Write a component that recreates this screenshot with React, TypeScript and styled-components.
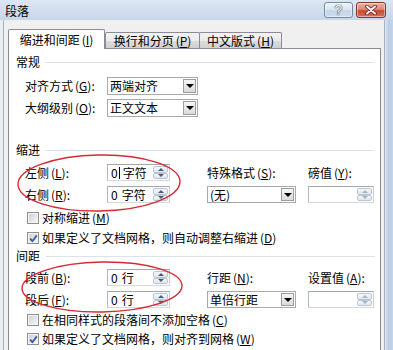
import React from "react";
import styled, { createGlobalStyle } from "styled-components";

const FONT = `"Noto Sans CJK SC", "Noto Sans", "DejaVu Sans", sans-serif`;

const GlobalStyle = createGlobalStyle`
  html, body { margin: 0; padding: 0; background: #ffffff; }
  body { font-family: ${FONT}; font-size: 12px; color: #000; }
  * { box-sizing: border-box; }
`;

const Window = styled.div`
  position: relative;
  width: 393px;
  height: 350px;
  overflow: hidden;
  display: flex;
  flex-direction: column;
  font-family: ${FONT};
  font-size: 12px;
  color: #000;
  background: #cbd9ea;
`;

const TitleBar = styled.div`
  flex: none;
  height: 20px;
  display: flex;
  align-items: flex-start;
  padding: 0 7px 0 5px;
  background: linear-gradient(180deg, #dce6f3 0%, #d0ddee 60%, #c7d6ea 100%);
`;

const Title = styled.div`
  flex: 1;
  line-height: 22px;
  color: #000;
`;

const CaptionButtons = styled.div`
  display: flex;
  gap: 3px;
  margin-top: 2px;
`;

const CaptionButton = styled.div<{ $variant: "help" | "close" }>`
  width: ${(p) => (p.$variant === "close" ? 30 : 29)}px;
  height: 16px;
  border-radius: 3px;
  display: flex;
  align-items: center;
  justify-content: center;
  border: 1px solid ${(p) => (p.$variant === "close" ? "#7d3b30" : "#7288a5")};
  background: ${(p) =>
    p.$variant === "close"
      ? "linear-gradient(180deg, #eab2a3 0%, #dc8a75 45%, #c6492f 55%, #d4705a 100%)"
      : "linear-gradient(180deg, #eef3f9 0%, #dbe5f1 45%, #c4d4e8 55%, #cfdcec 100%)"};
  box-shadow: inset 0 0 0 1px rgba(255, 255, 255, 0.45);
`;

const HelpGlyph = styled.span`
  font-family: "Liberation Sans", sans-serif;
  font-size: 14px;
  line-height: 1;
  color: #f7f9fc;
  text-shadow: 0 0 1px #3b4a62, 0 0 1px #3b4a62, 0 0 1px #3b4a62;
`;

const FrameRow = styled.div`
  flex: 1;
  min-height: 0;
  display: flex;
`;

const LeftEdge = styled.div`
  flex: none;
  width: 4px;
  background: #e9eef5;
  border-right: 1px solid #a7b3c2;
`;

const RightEdge = styled.div`
  flex: none;
  width: 9px;
  border-left: 1px solid #a7b3c2;
  background: linear-gradient(90deg, #dce6f2 0%, #b9cce4 50%, #c6d6ea 100%);
`;

const Body = styled.div`
  flex: 1;
  min-width: 0;
  background: #f0f0f0;
  padding: 9px 3px 0 4px;
  display: flex;
  flex-direction: column;
`;

const TabStrip = styled.div`
  position: relative;
  z-index: 1;
  flex: none;
  height: 20px;
  display: flex;
  align-items: flex-end;
`;

const Tab = styled.div<{ $active?: boolean; $w: number; $overlap?: boolean }>`
  width: ${(p) => p.$w}px;
  height: ${(p) => (p.$active ? 20 : 16)}px;
  margin-bottom: ${(p) => (p.$active ? 0 : 1)}px;
  margin-left: ${(p) => (p.$overlap ? -1 : 0)}px;
  border: 1px solid #898c95;
  border-bottom: none;
  border-radius: 2px 2px 0 0;
  background: ${(p) =>
    p.$active
      ? "#ffffff"
      : "linear-gradient(180deg, #f3f3f3 0%, #ebebeb 50%, #dddddd 51%, #d0d0d0 100%)"};
  display: flex;
  align-items: center;
  justify-content: center;
  white-space: nowrap;
  line-height: 14px;
`;

const Panel = styled.div`
  flex: 1;
  margin-top: -1px;
  background: #ffffff;
  border: 1px solid #898c95;
  border-bottom: none;
  display: flex;
  flex-direction: column;
  padding: 6px 5px 0 0;
`;

const SectionHeader = styled.div<{ $mt: number }>`
  margin-top: ${(p) => p.$mt}px;
  height: 14px;
  display: flex;
  align-items: center;
  padding-left: 7px;
  line-height: 14px;
  white-space: nowrap;
  &::after {
    content: "";
    flex: 1;
    height: 1px;
    background: #dde2e8;
    margin-left: 6px;
  }
`;

const FieldGrid = styled.div<{ $mt: number; $rowH: number; $gap: number; $cols: string }>`
  margin-top: ${(p) => p.$mt}px;
  padding-left: 16px;
  display: grid;
  grid-template-columns: ${(p) => p.$cols};
  grid-auto-rows: ${(p) => p.$rowH}px;
  row-gap: ${(p) => p.$gap}px;
  align-items: stretch;
  justify-items: start;
`;

const FieldLabel = styled.div`
  display: flex;
  align-items: center;
  white-space: nowrap;
  line-height: 14px;
`;

const Key = styled.span`
  margin-left: 2px;
`;

const U = styled.span`
  text-decoration: underline;
  text-underline-offset: 1px;
`;

const Select = styled.div<{ $w: number }>`
  width: ${(p) => p.$w}px;
  height: 100%;
  display: flex;
  align-items: stretch;
  background: #ffffff;
  border: 1px solid #a9a9a9;
  padding: 1px 1px 1px 2px;
`;

const SelectText = styled.span`
  flex: 1;
  display: flex;
  align-items: center;
  white-space: nowrap;
  line-height: 14px;
`;

const DropButton = styled.span`
  width: 13px;
  border: 1px solid #9c9c9c;
  background: linear-gradient(180deg, #f6f6f6, #dadada);
  display: flex;
  align-items: center;
  justify-content: center;
  &::after {
    content: "";
    border-left: 4px solid transparent;
    border-right: 4px solid transparent;
    border-top: 4px solid #000;
  }
`;

const Spin = styled.div<{ $w: number }>`
  width: ${(p) => p.$w}px;
  height: 100%;
  display: flex;
  background: #ffffff;
  border: 1px solid;
  border-color: #a2a8b1 #cdd1d7 #d5d9de #b3b8bf;
  padding: 1px;
`;

const SpinValue = styled.span`
  flex: 1;
  padding-left: 2px;
  display: flex;
  align-items: center;
  white-space: nowrap;
  line-height: 13px;
`;

const SpinText = styled.span`
  display: inline-flex;
  align-items: center;
`;

const Unit = styled.span`
  margin-left: 4px;
`;

const Caret = styled.span`
  display: inline-block;
  width: 1px;
  height: 12px;
  background: #000;
  margin: 0 -1px 0 1px;
`;

const SpinButtons = styled.div`
  width: 15px;
  display: flex;
  flex-direction: column;
`;

const SpinButton = styled.div<{ $dir: "up" | "down"; $dim?: boolean }>`
  flex: 1;
  border: 1px solid #bcc6d2;
  border-radius: 2px;
  background: linear-gradient(180deg, #f6f8fb, #dfe6ee);
  display: flex;
  align-items: center;
  justify-content: center;
  &::after {
    content: "";
    border-left: 3px solid transparent;
    border-right: 3px solid transparent;
    ${(p) => (p.$dir === "up" ? "border-bottom" : "border-top")}: 3px solid
      ${(p) => (p.$dim ? "#a9b4c3" : "#4c5d78")};
  }
`;

const CheckRow = styled.div<{ $mt: number }>`
  margin-top: ${(p) => p.$mt}px;
  height: 14px;
  display: flex;
  align-items: center;
  gap: 3px;
  padding-left: 18px;
  white-space: nowrap;
  line-height: 14px;
`;

const CheckBox = styled.span`
  flex: none;
  width: 12px;
  height: 12px;
  border: 1px solid #8e8f8f;
  background: linear-gradient(135deg, #c9cdd3 0%, #e6e8eb 60%, #f7f7f7 100%);
  box-shadow: inset 0 0 0 1px #f4f4f4;
  display: flex;
  align-items: center;
  justify-content: center;
`;

const Annotation = styled.svg`
  position: absolute;
  left: 0;
  top: 0;
  width: 393px;
  height: 350px;
  pointer-events: none;
  z-index: 5;
`;

const Label: React.FC<{ text: string; k: string; colon?: boolean }> = ({ text, k, colon = true }) => (
  <>
    {text}
    <Key>
      (<U>{k}</U>){colon ? ":" : ""}
    </Key>
  </>
);

const SpinBox: React.FC<{ w: number; value?: string; unit?: string; caret?: boolean; dim?: boolean }> = ({
  w,
  value,
  unit,
  caret,
  dim,
}) => (
  <Spin $w={w}>
    <SpinValue>
      {value !== undefined && (
        <SpinText>
          <span>{value}</span>
          {caret && <Caret />}
          <Unit>{unit}</Unit>
        </SpinText>
      )}
    </SpinValue>
    <SpinButtons>
      <SpinButton $dir="up" $dim={dim} />
      <SpinButton $dir="down" $dim={dim} />
    </SpinButtons>
  </Spin>
);

const Combo: React.FC<{ w: number; value: string }> = ({ w, value }) => (
  <Select $w={w}>
    <SelectText>{value}</SelectText>
    <DropButton />
  </Select>
);

const Check: React.FC<{ checked?: boolean; mt: number; children: React.ReactNode }> = ({ checked, mt, children }) => (
  <CheckRow $mt={mt}>
    <CheckBox>
      {checked && (
        <svg width="9" height="9" viewBox="0 0 9 9">
          <path d="M1.2 4.6 L3.4 7.2 L7.8 1.4" fill="none" stroke="#3b57a0" strokeWidth="1.8" strokeLinejoin="round" />
        </svg>
      )}
    </CheckBox>
    <span>{children}</span>
  </CheckRow>
);

const COLS4 = "82px 100px 101px 66px";

export default function App() {
  return (
    <>
      <GlobalStyle />
      <Window>
        <TitleBar>
          <Title>段落</Title>
          <CaptionButtons>
            <CaptionButton $variant="help">
              <HelpGlyph>?</HelpGlyph>
            </CaptionButton>
            <CaptionButton $variant="close">
              <svg width="12" height="10" viewBox="0 0 12 10">
                <path d="M2 1.5 L10 8.5 M10 1.5 L2 8.5" stroke="#5b1f16" strokeWidth="3.6" strokeLinecap="round" />
                <path d="M2 1.5 L10 8.5 M10 1.5 L2 8.5" stroke="#ffffff" strokeWidth="2" strokeLinecap="round" />
              </svg>
            </CaptionButton>
          </CaptionButtons>
        </TitleBar>
        <FrameRow>
          <LeftEdge />
          <Body>
            <TabStrip>
              <Tab $active $w={97}>
                <Label text="缩进和间距" k="I" colon={false} />
              </Tab>
              <Tab $w={95}>
                <Label text="换行和分页" k="P" colon={false} />
              </Tab>
              <Tab $w={83} $overlap>
                <Label text="中文版式" k="H" colon={false} />
              </Tab>
            </TabStrip>
            <Panel>
              <SectionHeader $mt={0}>常规</SectionHeader>
              <FieldGrid $mt={8} $rowH={18} $gap={4} $cols="82px 91px">
                <FieldLabel>
                  <Label text="对齐方式" k="G" />
                </FieldLabel>
                <Combo w={91} value="两端对齐" />
                <FieldLabel>
                  <Label text="大纲级别" k="O" />
                </FieldLabel>
                <Combo w={91} value="正文文本" />
              </FieldGrid>

              <SectionHeader $mt={26}>缩进</SectionHeader>
              <FieldGrid $mt={7} $rowH={17} $gap={5} $cols={COLS4}>
                <FieldLabel>
                  <Label text="左侧" k="L" />
                </FieldLabel>
                <SpinBox w={63} value="0" unit="字符" caret />
                <FieldLabel>
                  <Label text="特殊格式" k="S" />
                </FieldLabel>
                <FieldLabel>
                  <Label text="磅值" k="Y" />
                </FieldLabel>
                <FieldLabel>
                  <Label text="右侧" k="R" />
                </FieldLabel>
                <SpinBox w={63} value="0" unit="字符" />
                <Combo w={89} value="(无)" />
                <SpinBox w={66} dim />
              </FieldGrid>
              <Check mt={8}>
                对称缩进<Label text="" k="M" colon={false} />
              </Check>
              <Check mt={6} checked>
                如果定义了文档网格，则自动调整右缩进<Label text="" k="D" colon={false} />
              </Check>

              <SectionHeader $mt={4}>间距</SectionHeader>
              <FieldGrid $mt={6} $rowH={17} $gap={5} $cols={COLS4}>
                <FieldLabel>
                  <Label text="段前" k="B" />
                </FieldLabel>
                <SpinBox w={63} value="0" unit="行" />
                <FieldLabel>
                  <Label text="行距" k="N" />
                </FieldLabel>
                <FieldLabel>
                  <Label text="设置值" k="A" />
                </FieldLabel>
                <FieldLabel>
                  <Label text="段后" k="F" />
                </FieldLabel>
                <SpinBox w={63} value="0" unit="行" />
                <Combo w={89} value="单倍行距" />
                <SpinBox w={66} dim />
              </FieldGrid>
              <Check mt={5}>
                在相同样式的段落间不添加空格<Label text="" k="C" colon={false} />
              </Check>
              <Check mt={5} checked>
                如果定义了文档网格，则对齐到网格<Label text="" k="W" colon={false} />
              </Check>
            </Panel>
          </Body>
          <RightEdge />
        </FrameRow>
        <Annotation viewBox="0 0 393 350">
          <ellipse cx="99" cy="183" rx="81" ry="28" fill="none" stroke="#d42a35" strokeWidth="1.4" transform="rotate(-1 99 183)" />
          <ellipse cx="102" cy="287" rx="80" ry="25" fill="none" stroke="#d42a35" strokeWidth="1.4" transform="rotate(-1 102 287)" />
        </Annotation>
      </Window>
    </>
  );
}
